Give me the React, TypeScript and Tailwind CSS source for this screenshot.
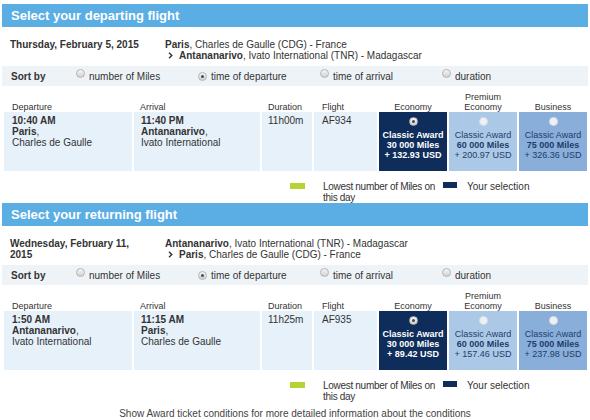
import clsx from "clsx";

type Fare = { miles: string; usd: string };

type Flight = {
  title: string;
  date: string;
  from: [string, string];
  to: [string, string];
  dep: { time: string; city: string; airport: string };
  arr: { time: string; city: string; airport: string };
  duration: string;
  number: string;
  fares: [Fare, Fare, Fare];
};

const FLIGHTS: Flight[] = [
  {
    title: "Select your departing flight",
    date: "Thursday, February 5, 2015",
    from: ["Paris", "Charles de Gaulle (CDG) - France"],
    to: ["Antananarivo", "Ivato International (TNR) - Madagascar"],
    dep: { time: "10:40 AM", city: "Paris", airport: "Charles de Gaulle" },
    arr: { time: "11:40 PM", city: "Antananarivo", airport: "Ivato International" },
    duration: "11h00m",
    number: "AF934",
    fares: [
      { miles: "30 000 Miles", usd: "+ 132.93 USD" },
      { miles: "60 000 Miles", usd: "+ 200.97 USD" },
      { miles: "75 000 Miles", usd: "+ 326.36 USD" },
    ],
  },
  {
    title: "Select your returning flight",
    date: "Wednesday, February 11, 2015",
    from: ["Antananarivo", "Ivato International (TNR) - Madagascar"],
    to: ["Paris", "Charles de Gaulle (CDG) - France"],
    dep: { time: "1:50 AM", city: "Antananarivo", airport: "Ivato International" },
    arr: { time: "11:15 AM", city: "Paris", airport: "Charles de Gaulle" },
    duration: "11h25m",
    number: "AF935",
    fares: [
      { miles: "30 000 Miles", usd: "+ 89.42 USD" },
      { miles: "60 000 Miles", usd: "+ 157.46 USD" },
      { miles: "75 000 Miles", usd: "+ 237.98 USD" },
    ],
  },
];

const SORTS = ["number of Miles", "time of departure", "time of arrival", "duration"];

function Radio({ checked, muted }: { checked?: boolean; muted?: boolean }) {
  return (
    <span
      className={clsx(
        "inline-flex h-[9px] w-[9px] shrink-0 items-center justify-center rounded-full border",
        muted
          ? "border-[#d6dde6] bg-[#eef0f2]"
          : "border-[#b4b4b4] bg-linear-to-b from-[#f6f6f6] to-[#d2d2d2]"
      )}
    >
      {checked && <span className="h-[3px] w-[3px] rounded-full bg-[#4a4a4a]" />}
    </span>
  );
}

function Chevron() {
  return (
    <svg width="5" height="7" viewBox="0 0 5 7" className="shrink-0">
      <path d="M1 0.8 L3.8 3.5 L1 6.2" fill="none" stroke="#333" strokeWidth="1.4" />
    </svg>
  );
}

function Place({ time, city, airport }: { time: string; city: string; airport: string }) {
  return (
    <>
      <div className="font-bold">{time}</div>
      <div>
        <span className="font-bold">{city}</span>,
      </div>
      <div>{airport}</div>
    </>
  );
}

function FareCell({ fare, selected, tone }: { fare: Fare; selected?: boolean; tone: string }) {
  return (
    <div
      className={clsx(
        "flex w-[68px] flex-col items-center pt-[5px] text-center text-[9px] leading-[10px]",
        tone,
        selected ? "font-bold text-white" : "text-[#1e3c6a]"
      )}
    >
      <Radio checked={selected} muted={!selected} />
      <div className="mt-[4px]">Classic Award</div>
      <div className="font-bold">{fare.miles}</div>
      <div>{fare.usd}</div>
    </div>
  );
}

function FlightSection({ f }: { f: Flight }) {
  return (
    <section>
      <div className="flex h-[23px] items-center bg-[#5aaee4] pl-[9px] text-[13px] font-bold text-white">
        {f.title}
      </div>

      <div className="flex pt-[12px] pb-[5px] pl-[8px]">
        <div className="w-[155px] pr-[20px] font-bold">{f.date}</div>
        <div>
          <div>
            <span className="font-bold">{f.from[0]}</span>, {f.from[1]}
          </div>
          <div className="flex items-center pl-[3px]">
            <Chevron />
            <span className="ml-[6px]">
              <span className="font-bold">{f.to[0]}</span>, {f.to[1]}
            </span>
          </div>
        </div>
      </div>

      <div className="flex h-[20px] items-center bg-[#eef3f7] pl-[9px]">
        <div className="w-[64px] font-bold">Sort by</div>
        {SORTS.map((s, i) => (
          <label key={s} className="flex w-[122px] items-center">
            <span className="-mt-[3px] ml-[1px]">
              <Radio checked={i === 1} />
            </span>
            <span className="ml-[4px]">{s}</span>
          </label>
        ))}
      </div>

      <div className="ml-[2px] flex h-[26px] items-end gap-[2px] text-[9px] leading-[10px]">
        <div className="w-[128px] pl-[8px]">Departure</div>
        <div className="w-[126px] pl-[6px]">Arrival</div>
        <div className="w-[50px] pl-[6px]">Duration</div>
        <div className="w-[63px] pl-[8px]">Flight</div>
        <div className="w-[68px] text-center">Economy</div>
        <div className="w-[68px] text-center">
          Premium
          <br />
          Economy
        </div>
        <div className="w-[68px] text-center">Business</div>
      </div>

      <div className="ml-[2px] flex h-[59px] gap-[2px]">
        <div className="w-[128px] bg-[#e7f1fa] pt-[3px] pl-[8px]">
          <Place {...f.dep} />
        </div>
        <div className="w-[126px] bg-[#e7f1fa] pt-[3px] pl-[7px]">
          <Place {...f.arr} />
        </div>
        <div className="w-[50px] bg-[#e7f1fa] pt-[3px] pl-[6px]">{f.duration}</div>
        <div className="w-[63px] bg-[#e7f1fa] pt-[3px] pl-[8px]">{f.number}</div>
        <FareCell fare={f.fares[0]} selected tone="bg-[#0e2d5a]" />
        <FareCell fare={f.fares[1]} tone="bg-[#abc9e7]" />
        <FareCell fare={f.fares[2]} tone="bg-[#88aed9]" />
      </div>

      <div className="mt-[10px] ml-[288px] flex">
        <span className="mt-[2px] h-[6px] w-[15px] bg-[#b6d334]" />
        <span className="ml-[18px] w-[114px] tracking-[-0.3px]">Lowest number of Miles on this day</span>
        <span className="mt-[1px] ml-[6px] h-[6px] w-[14px] bg-[#0e2d5a]" />
        <span className="ml-[10px]">Your selection</span>
      </div>
    </section>
  );
}

export default function App() {
  return (
    <div className="h-[420px] w-[590px] overflow-hidden bg-white px-[2px] pt-[4px] font-['Liberation_Sans',Arial,sans-serif] text-[10px] leading-[11px] text-[#333]">
      {FLIGHTS.map((f) => (
        <FlightSection key={f.number} f={f} />
      ))}
      <p className="mt-[6px] text-center text-[#444]">
        Show Award ticket conditions for more detailed information about the conditions
      </p>
    </div>
  );
}
